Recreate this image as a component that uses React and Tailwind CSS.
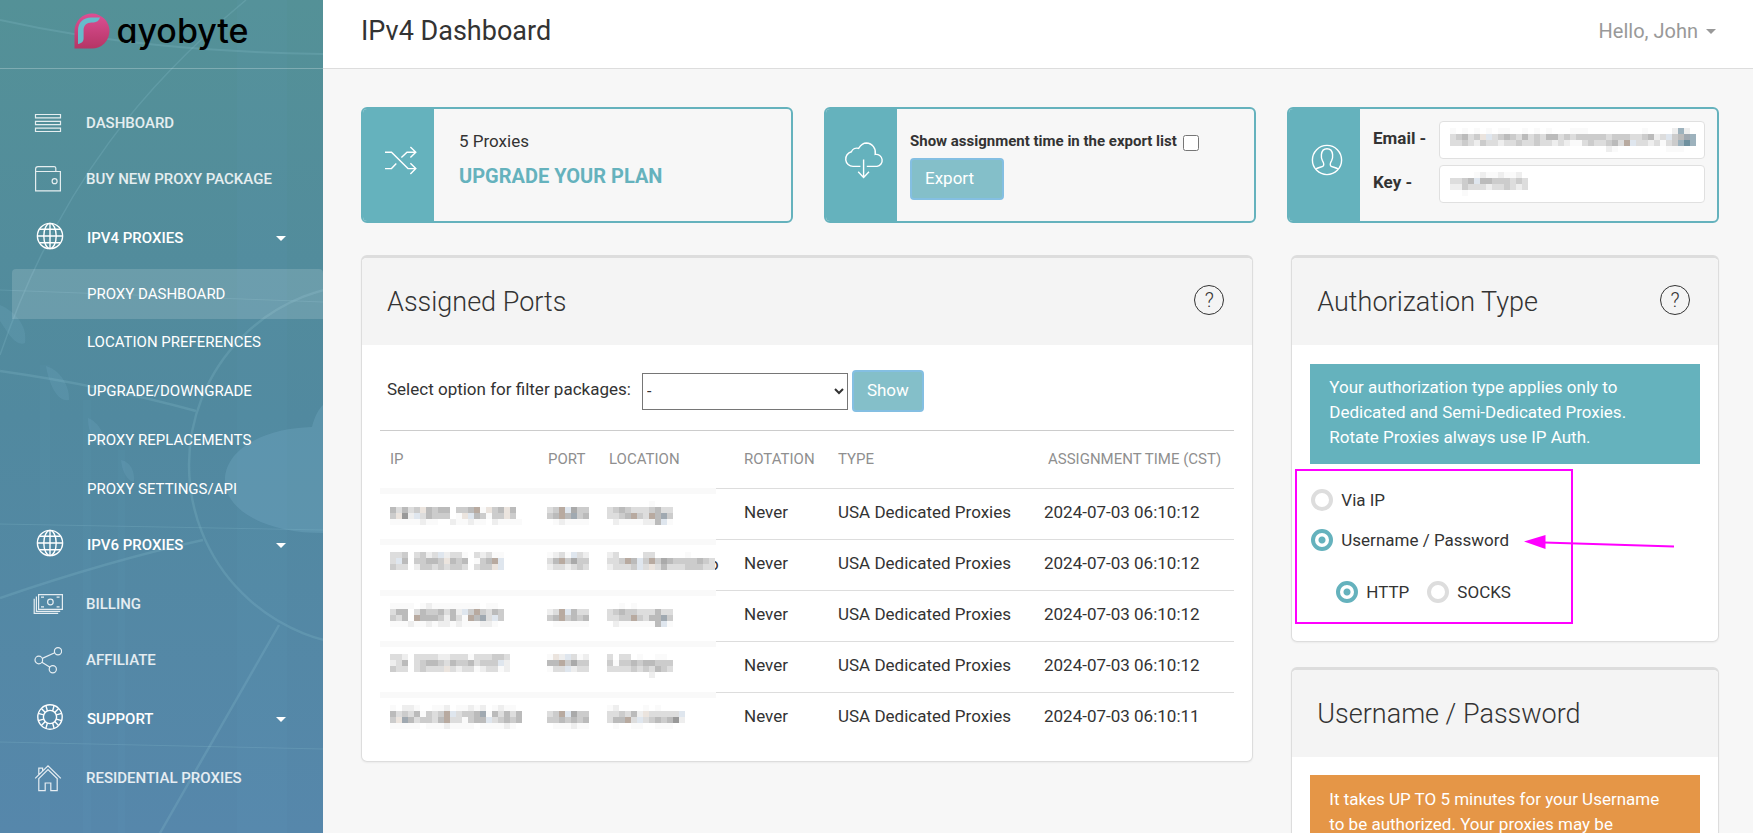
import React from "react";

/* ---------- icons ---------- */

function Stroke({ className = "", children, w = 28, h = 28, sw = 1.2 }) {
  return (
    <svg
      className={className}
      width={w}
      height={h}
      viewBox={`0 0 ${w} ${h}`}
      fill="none"
      stroke="currentColor"
      strokeWidth={sw}
      aria-hidden="true"
    >
      {children}
    </svg>
  );
}

const MenuIcon = () => (
  <Stroke>
    <path d="M1.5 5.5h25v3.4h-25zM1.5 12.3h25v3.4h-25zM1.5 19.1h25v3.4h-25z" />
  </Stroke>
);

const WalletIcon = () => (
  <Stroke>
    <path d="M1.6 6.5h24.8v19.3H1.6zM1.6 6.5V4a2.4 2.4 0 0 1 2.4-2.4h16.2A1.6 1.6 0 0 1 21.8 3v3.5" />
    <circle cx="20.6" cy="16.2" r="2.5" />
  </Stroke>
);

const GlobeIcon = () => (
  <Stroke sw={1.4}>
    <circle cx="14" cy="14" r="12.6" />
    <ellipse cx="14" cy="14" rx="6.2" ry="12.6" />
    <path d="M14 1.4v25.2M1.4 14h25.2M3.6 7.2h20.8M3.6 20.8h20.8" />
  </Stroke>
);

const BillIcon = () => (
  <Stroke w={30}>
    <path d="M5.6 4.6h23.8v14.8H5.6zM3.4 6.6v14.8h23.8M1.2 8.8v14.6h24" />
    <circle cx="17.4" cy="12" r="2.8" />
    <path d="M8 7.2h3M23.6 7.2h3M8 16.8h3M23.6 16.8h3" />
  </Stroke>
);

const ShareIcon = () => (
  <Stroke>
    <circle cx="4.8" cy="14" r="3.8" />
    <circle cx="24" cy="5.2" r="3.6" />
    <circle cx="18.8" cy="23.2" r="3.6" />
    <path d="M8.3 12.4 20.7 6.8M7.9 16.2l8.1 5" />
  </Stroke>
);

const LifebuoyIcon = () => (
  <Stroke sw={1.4}>
    <circle cx="14" cy="14" r="12.2" />
    <circle cx="14" cy="14" r="6.6" />
    <path d="M9.9 2.6l1.5 5.4M5.4 5.6l3.9 4M18.1 2.6l-1.5 5.4M22.6 5.6l-3.9 4M9.9 25.4l1.5-5.4M5.4 22.4l3.9-4M18.1 25.4l-1.5-5.4M22.6 22.4l-3.9-4M2.3 10.4l5.3 1.5M2.3 17.6l5.3-1.5M25.7 10.4l-5.3 1.5M25.7 17.6l-5.3-1.5" />
  </Stroke>
);

const HouseIcon = () => (
  <Stroke>
    <path d="M1.2 14.4 14 1.8l12.8 12.6M4.8 10.8V4.2h3.8V7M4.8 14.6 14 5.6l9.2 9v12h-6.4v-7.6h-5.6v7.6H4.8z" />
  </Stroke>
);

const ShuffleIcon = () => (
  <Stroke w={34} h={30} sw={1.4} className="text-white">
    <path d="M1 7.3h6.5L24 23.6h8M1 23.6h6.5l4.8-5M17.4 12.6l5.6-5.3h9M26.4 2l5.4 5.3-5.4 5.3M26.4 18.3l5.4 5.3-5.4 5.3" />
  </Stroke>
);

const CloudIcon = () => (
  <Stroke w={40} h={38} sw={1.4} className="text-white">
    <path d="M16.4 25.4H9a7.4 7.4 0 0 1-1.6-14.6 6 6 0 0 1 7.2-3.4C17 3.6 19.4 2 22.4 2a9.4 9.4 0 0 1 8.8 11.4 6 6 0 0 1 1.8 12H22.8" />
    <path d="M19.6 18.4v18M14.2 30.8l5.4 5.6 5.4-5.6" />
  </Stroke>
);

const UserIcon = () => (
  <Stroke w={32} h={32} sw={1.4} className="text-white">
    <circle cx="16" cy="16" r="14.6" />
    <path d="M4.6 25.2c2-1.8 6.4-2 7.6-3.2 1.2-1.4.4-3.4-.8-5.4-1-1.8-1.2-4-1-6C10.8 7 13 4.8 16 4.8s5.2 2.2 5.600 5.800c.2 2 0 4.200-1 6-1.200 2-2 4-.8 5.400 1.200 1.200 5.600 1.400 7.600 3.200" />
  </Stroke>
);

function Caret({ className = "" }) {
  return (
    <svg className={className} width="10" height="5" viewBox="0 0 10 5" aria-hidden="true">
      <path d="M0 0h10L5 5z" fill="currentColor" />
    </svg>
  );
}

function Logo() {
  return (
    <a href="#" className="flex items-center gap-1.5" aria-label="Rayobyte">
      <svg width="36" height="36" viewBox="0 0 36 36" aria-hidden="true">
        <defs>
          <linearGradient id="mark" x1="0" y1="0" x2="0" y2="1">
            <stop offset="0" stopColor="#dc4f94" />
            <stop offset="1" stopColor="#b53565" />
          </linearGradient>
        </defs>
        <path d="M.5 35.5V17.8A17.5 17.5 0 1 1 18 35.5z" fill="url(#mark)" />
        <path
          d="M4 31V17.5C4 9.5 9.5 4.5 17 4.5h9c-1 3.4-3.4 4.9-6.4 4.9h-2C12.6 9.4 9.6 12.5 9.6 17v8.5c0 3-2.2 5-5.600 5.500z"
          fill="#66bccb"
        />
      </svg>
      <span className="font-[Inter,sans-serif] text-[34px] leading-9 font-medium text-black [font-feature-settings:'cv11']">
        ayobyte
      </span>
    </a>
  );
}

/* ---------- pixelated values ---------- */

const CELL = 6;
const TINTS = {
  t: "#b8aaa0",
  u: "#ebe4de",
  v: "#dfe6ee",
  w: "#a0a9b1",
  x: "#6f919f",
  y: "#9db2bd",
  f: "#fafafa",
};

function Mosaic({ rows, className = "" }) {
  const cols = Math.max(...rows.map((r) => r.length));
  return (
    <svg
      className={className}
      width={cols * CELL}
      height={rows.length * CELL}
      shapeRendering="crispEdges"
      aria-hidden="true"
    >
      {rows.flatMap((row, y) =>
        row.split("").map((c, x) =>
          c === " " ? null : (
            <rect
              key={`${x}-${y}`}
              x={x * CELL}
              y={y * CELL}
              width={CELL}
              height={CELL}
              fill={TINTS[c] || `#${c}${c}${c}`}
            />
          )
        )
      )}
    </svg>
  );
}

const PORT = ["       ", "dctvacc", "cbtbwcb", " feffff"];
const CHICAGO = ["       f   ", "dcbcdddcbdd", "ddcbtcdtbwc", " effffeebvf"];

const ROWS = [
  {
    ip: ["                    ", "bdbdcubcbb ccbtfucbub", "cu9evdbccc fuvbcfccuc", "fffffeff  effeff effff"],
    port: PORT,
    location: CHICAGO,
    time: "2024-07-03 06:10:12",
  },
  {
    ip: ["ddc dcedveddf dedff", "dvb ccbbcubcb fcbtv", "cdd eccdcdccd dccuv", "                   "],
    port: ["fedfvde", "dbtcacc", "eddedcd", "       "],
    location: ["ed    dd     f    ", "ddctbvctcabccccbcd", "edddcvdudbdddcccdd", "                  "],
    overflow: "o",
    time: "2024-07-03 06:10:12",
  },
  {
    ip: ["ffff feffffffff ff", "dbb dbccbdbevctcdbc", "cdb tbbbcebdftbwdvc", "fffeffefeefefffeef"],
    port: ["       ", "edtvbdd", "cbtcbcb", " ffffff"],
    location: ["  f f      ", "dcbccdddbdd", "ddcctcdbbwc", " effffffbvf"],
    time: "2024-07-03 06:10:12",
  },
  {
    ip: ["dde ddddeedddfdddccd", "edb dcbbcdbccbdcccve", "cdd dcdddudeddfeddfe", "                    "],
    port: ["fuevdfe", "bbtcacc", "fddvedd", "       "],
    location: ["d dd f  ff ", "cfccbcbbccc", "ddddcdcdbcd", "       e   "],
    time: "2024-07-03 06:10:12",
  },
  {
    ip: ["f eef  ffe ffefe feff", "bdcdbfcdctvdccbwfbdbdb", "cuwbdccdbtddfcbbvdcbcb", "fffff fffeffff ffffef"],
    port: ["       ", "dctvacc", "ccbcbcb", " fffeff"],
    location: ["fe    f f    ", "ddcdbeudddddv", "dbbtdvdcbcb9e", " f  ff  fff  "],
    time: "2024-07-03 06:10:11",
  },
];

const EMAIL_PIXELS = [
  "f f f f ff  f f f   fff         f    eye ",
  "dcbdcuvdcbcdbdcdbbdcdcccccdcccddcbedvcbwy",
  "ddcdecddeddcddcddedeffdcddcbdtvddedfdcyxy",
  "                          ef        fff  ",
];
const KEY_PIXELS = ["    feffeffe ", "ddcbvbbcccdcd", "eecdddeddcded", "  f          "];

/* ---------- sidebar ---------- */

function SidebarArt() {
  return (
    <svg
      className="absolute inset-0 h-full w-full"
      viewBox="0 0 323 833"
      preserveAspectRatio="xMinYMin slice"
      fill="none"
      stroke="#8cc4d2"
      aria-hidden="true"
    >
      <g strokeOpacity=".22">
        <path d="M246 0C150 80 60 180 0 355" strokeWidth="1.5" />
        <path d="M0 20c100 22 200 32 323 34" strokeWidth="2" />
        <path d="M0 290l323 12M0 524l323 6M0 742l323 7" strokeWidth="1" />
        <path d="M0 371c70 10 130 22 196 40" strokeWidth="2.5" />
        <circle cx="370" cy="465" r="181" strokeWidth="2.5" />
        <path d="M0 598C70 574 130 556 203 540M279 625L160 833" strokeWidth="2.5" />
      </g>
      <g fill="#7fb9d0" stroke="none">
        <path d="M312 427c3-12 7-18 11-22v128c-56 0-98-22-98-53s40-52 87-53z" fillOpacity=".25" />
        <path
          d="M0 305c14 6 28 20 25 38-10 4-18-12-25-22zM46 366c14 4 24 20 23 34-12 2-20-16-23-34zM88 418c10 4 18 16 16 28-10 0-16-14-16-28zM121 460c10 2 14 12 13 22-8-2-12-12-13-22z"
          fillOpacity=".17"
        />
        <path d="M40 365h10v468H40zM83 400h8v433h-8zM118 450h7v383h-7zM237 0h50v833h-50z" fillOpacity=".05" />
      </g>
    </svg>
  );
}

function NavItem({ icon, label }) {
  return (
    <li>
      <a href="#" className="flex h-14 items-center text-white/85">
        <span className="flex w-[86px] justify-center pl-2.5">{icon}</span>
        {label}
      </a>
    </li>
  );
}

function NavGroup({ icon, label, children }) {
  return (
    <li>
      <button
        type="button"
        aria-expanded={Boolean(children)}
        className="flex h-[62px] w-full items-center text-left text-white uppercase"
      >
        <span className="flex w-[87px] justify-center pb-1 pl-3">{icon}</span>
        <span className="flex-1">{label}</span>
        <Caret className="mr-[37px]" />
      </button>
      {children}
    </li>
  );
}

const SUB_ITEMS = ["Location preferences", "Upgrade/Downgrade", "Proxy replacements", "Proxy settings/API"];

function Sidebar() {
  return (
    <aside className="relative flex w-[323px] shrink-0 flex-col overflow-hidden bg-gradient-to-b from-[#549197] via-[#51899f] to-[#5687ab]">
      <SidebarArt />
      <div className="relative flex h-[69px] shrink-0 items-start justify-center border-b border-white/25 pt-[13px]">
        <Logo />
      </div>
      <nav className="relative pt-[26px]">
        <ul className="text-[15px] leading-5 font-medium">
          <NavItem icon={<MenuIcon />} label="DASHBOARD" />
          <NavItem icon={<WalletIcon />} label="BUY NEW PROXY PACKAGE" />
          <NavGroup icon={<GlobeIcon />} label="IPV4 PROXIES">
            <ul className="-mb-px pl-3 font-normal text-white uppercase">
              <li>
                <a
                  href="#"
                  aria-current="page"
                  className="block h-[50px] rounded-t bg-white/15 pt-[15px] pl-[75px]"
                >
                  Proxy dashboard
                </a>
              </li>
              {SUB_ITEMS.map((item) => (
                <li key={item}>
                  <a href="#" className="block h-[49px] pt-[13px] pl-[75px]">
                    {item}
                  </a>
                </li>
              ))}
            </ul>
          </NavGroup>
          <NavGroup icon={<GlobeIcon />} label="IPV6 PROXIES" />
          <NavItem icon={<BillIcon />} label="BILLING" />
          <NavItem icon={<ShareIcon />} label="AFFILIATE" />
          <NavGroup icon={<LifebuoyIcon />} label="SUPPORT" />
          <NavItem icon={<HouseIcon />} label="RESIDENTIAL PROXIES" />
        </ul>
      </nav>
    </aside>
  );
}

/* ---------- main area ---------- */

function InfoCard({ icon, children }) {
  return (
    <section className="flex h-[116px] overflow-hidden rounded-md border-2 border-[#65b2bd]">
      <div className="flex w-[71px] shrink-0 items-center justify-center bg-[#65b2bd] pb-2.5 pl-1">{icon}</div>
      {children}
    </section>
  );
}

function Panel({ title, help, children }) {
  return (
    <section className="overflow-hidden rounded-md border border-t-[3px] border-[#ddd] bg-white shadow-xs">
      <header className="flex h-[87px] items-center justify-between bg-[#f4f4f4] pr-7 pl-[25px]">
        <h2 className="text-[27px] leading-9 font-light">{title}</h2>
        {help && (
          <button
            type="button"
            aria-label="Help"
            className="mb-1 flex size-[30px] items-center justify-center rounded-full border border-[#333] text-xl font-light"
          >
            ?
          </button>
        )}
      </header>
      {children}
    </section>
  );
}

function Radio({ label, ...props }) {
  return (
    <label className="flex items-center gap-2">
      <input
        type="radio"
        className="size-[22px] shrink-0 appearance-none rounded-full border-4 border-[#ddd] bg-white bg-[radial-gradient(circle,#65b2bd_3px,transparent_4px)] bg-size-[0px_0px] bg-center bg-no-repeat checked:border-[#65b2bd] checked:bg-size-[14px_14px]"
        {...props}
      />
      {label}
    </label>
  );
}

function PixelField({ id, label, pixels }) {
  return (
    <div className="flex items-start">
      <label htmlFor={id} className="w-[66px] shrink-0 pt-[5px] leading-6 font-bold">
        {label}
      </label>
      <div className="relative flex-1">
        <input
          id={id}
          type="text"
          readOnly
          className="block h-[38px] w-full rounded border border-[#e0e0e0] bg-white px-2.5"
        />
        <Mosaic rows={pixels} className="absolute top-[7px] left-[11px]" />
      </div>
    </div>
  );
}

const BAND = "pb-0.5 shadow-[inset_0_6px_0_#f9f9f9]";
const LINE = "border-t border-[#ddd] pb-0.5 whitespace-nowrap";

function PortsTable() {
  return (
    <table className="mt-[18px] mb-[18px] w-full table-fixed border-separate border-spacing-0 text-left">
      <colgroup>
        <col className="w-[157px]" />
        <col className="w-[61px]" />
        <col className="w-[118px]" />
        <col className="w-[112px]" />
        <col className="w-[206px]" />
        <col />
      </colgroup>
      <thead>
        <tr className="h-[58px] text-[15px] text-[#8f8f8f] uppercase [&>th]:border-t [&>th]:border-[#ccc] [&>th]:font-normal">
          <th className="pl-2.5">IP</th>
          <th className="pl-[11px]">Port</th>
          <th className="pl-[11px]">Location</th>
          <th className="pl-7">Rotation</th>
          <th className="pl-2.5">Type</th>
          <th className="pl-3.5 whitespace-nowrap">Assignment time (CST)</th>
        </tr>
      </thead>
      <tbody>
        {ROWS.map((row, i) => (
          <tr key={i} className="h-[51px]">
            <td className={`pl-2.5 ${BAND}`}>
              <Mosaic rows={row.ip} />
            </td>
            <td className={`pl-2.5 ${BAND}`}>
              <Mosaic rows={row.port} />
            </td>
            <td className={`pl-[9px] ${BAND}`}>
              <div className="relative">
                {row.overflow && <span className="absolute top-0 left-[102px] leading-6">{row.overflow}</span>}
                <Mosaic rows={row.location} className="relative" />
              </div>
            </td>
            <td className={`pl-7 ${LINE}`}>Never</td>
            <td className={`pl-2.5 ${LINE}`}>USA Dedicated Proxies</td>
            <td className={`pl-2.5 ${LINE}`}>{row.time}</td>
          </tr>
        ))}
      </tbody>
    </table>
  );
}

const BUTTON = "h-[42px] rounded border-2 border-[#84bfe2] bg-[#84bfc9] pb-0.5 leading-6 text-white";

export default function App() {
  return (
    <div className="flex h-screen overflow-hidden bg-[#f7f7f7] font-[Roboto,sans-serif] text-[17px] text-[#333]">
      <Sidebar />
      <div className="flex min-w-0 flex-1 flex-col">
        <header className="flex h-[69px] shrink-0 items-center justify-between border-b border-[#ddd] bg-white pr-[37px] pb-1.5 pl-[38px]">
          <h1 className="text-[27px] leading-9">IPv4 Dashboard</h1>
          <button type="button" className="flex items-center gap-2 text-xl text-[#999]">
            Hello, John
            <Caret />
          </button>
        </header>

        <main className="min-h-0 flex-1 overflow-y-auto pt-[38px] pr-[34px] pl-[38px] [scrollbar-width:none]">
          <div className="grid grid-cols-3 gap-[31px]">
            <InfoCard icon={<ShuffleIcon />}>
              <div className="pt-5 pl-[25px]">
                <p className="leading-6">5 Proxies</p>
                <a href="#" className="mt-[11px] block text-xl leading-6 font-bold text-[#65b2bd] uppercase">
                  Upgrade your plan
                </a>
              </div>
            </InfoCard>
            <InfoCard icon={<CloudIcon />}>
              <div className="pt-5 pl-[13px]">
                <label className="flex items-center gap-1.5 text-[15px] leading-6 font-bold">
                  Show assignment time in the export list
                  <input type="checkbox" className="mt-1 size-4" />
                </label>
                <button type="button" className={`${BUTTON} mt-[5px] w-[94px] pl-[13px] text-left`}>
                  Export
                </button>
              </div>
            </InfoCard>
            <InfoCard icon={<UserIcon />}>
              <div className="flex flex-1 flex-col gap-1.5 pt-3 pr-3 pl-[13px]">
                <PixelField id="email" label="Email -" pixels={EMAIL_PIXELS} />
                <PixelField id="key" label="Key -" pixels={KEY_PIXELS} />
              </div>
            </InfoCard>
          </div>

          <div className="mt-8 grid grid-cols-[893fr_428fr] items-start gap-[38px] pb-8">
            <Panel title="Assigned Ports" help>
              <div className="px-[18px] pt-[25px]">
                <div className="flex items-center gap-1 pl-[7px]">
                  <label htmlFor="package" className="pr-[7px] pb-0.5">
                    Select option for filter packages:
                  </label>
                  <select
                    id="package"
                    className="h-[37px] w-[206px] rounded-none border border-[#767676] bg-white text-base"
                  >
                    <option>-</option>
                  </select>
                  <button type="button" className={`${BUTTON} w-[72px]`}>
                    Show
                  </button>
                </div>
                <PortsTable />
              </div>
            </Panel>

            <div className="flex flex-col gap-[25px]">
              <Panel title="Authorization Type" help>
                <div className="px-[18px] pt-[19px] pb-[17px]">
                  <p className="bg-[#65b2bd] pt-[11px] pr-10 pb-3.5 pl-[19px] leading-[25px] text-white">
                    Your authorization type applies only to Dedicated and Semi-Dedicated Proxies. Rotate Proxies
                    always use IP Auth.
                  </p>
                  <fieldset
                    aria-label="Authorization type"
                    className="relative -ml-[15px] mt-[5px] h-[155px] w-[278px] border-2 border-[#f0f] pt-[18px] pl-3.5 leading-[22px]"
                  >
                    <Radio name="auth" label="Via IP" />
                    <div className="mt-[18px]">
                      <Radio name="auth" label="Username / Password" defaultChecked />
                    </div>
                    <div className="mt-[30px] flex gap-[18px] pl-[25px]">
                      <Radio name="protocol" label="HTTP" defaultChecked />
                      <Radio name="protocol" label="SOCKS" />
                    </div>
                    <svg
                      className="absolute top-16 left-[227px]"
                      width="152"
                      height="16"
                      viewBox="0 0 152 16"
                      aria-hidden="true"
                    >
                      <path d="M0 6.5 21.5 0v14z" fill="#f0f" />
                      <path d="M20 7.4 150 11.5" stroke="#f0f" strokeWidth="2" />
                    </svg>
                  </fieldset>
                </div>
              </Panel>

              <Panel title="Username / Password">
                <div className="px-[18px] pt-[18px] pb-[18px]">
                  <p className="bg-[#e59647] pt-3 pr-10 pb-[15px] pl-[19px] leading-[25px] text-white">
                    It takes UP TO 5 minutes for your Username to be authorized. Your proxies may be
                  </p>
                </div>
              </Panel>
            </div>
          </div>
        </main>
      </div>
    </div>
  );
}
